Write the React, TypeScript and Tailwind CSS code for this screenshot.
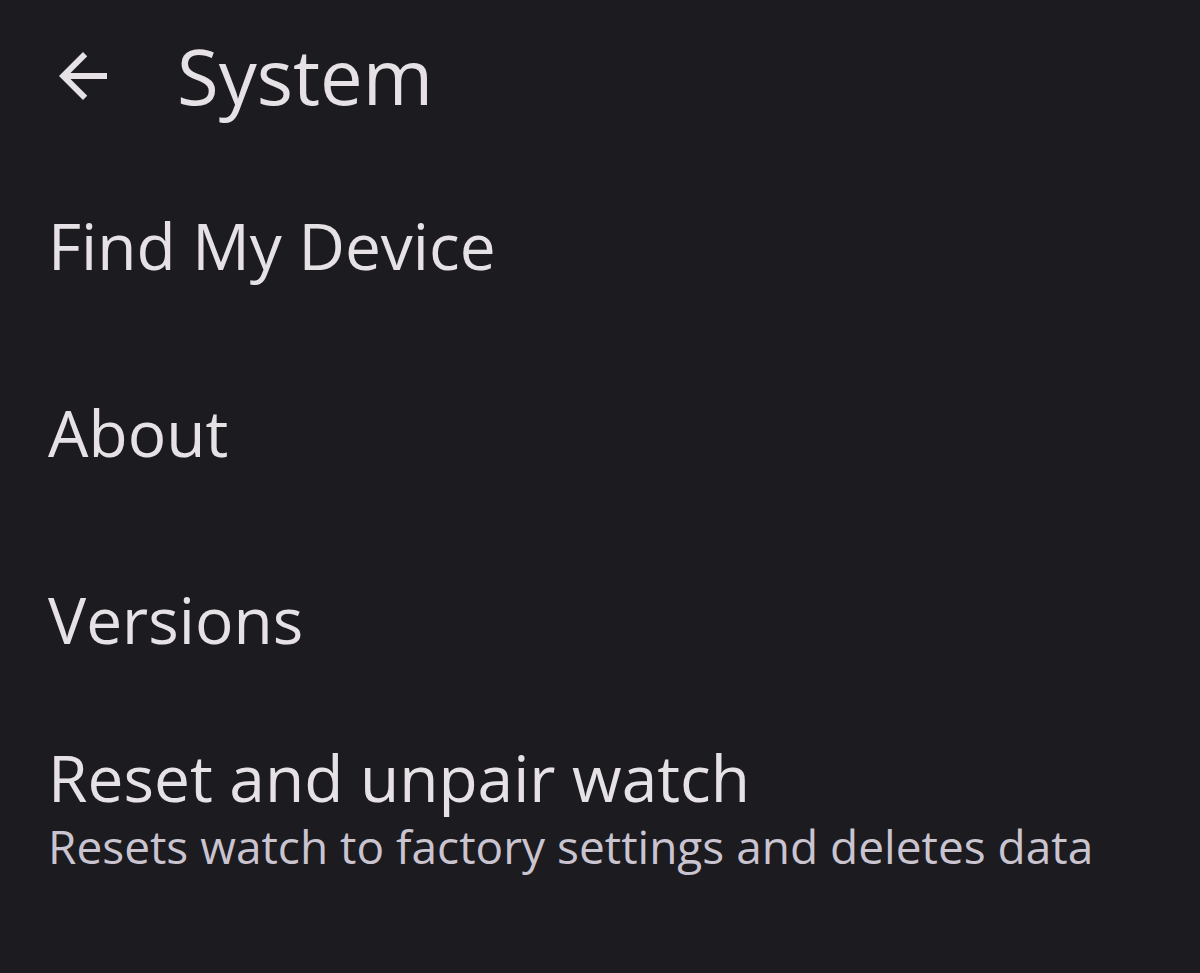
import React from 'react';

function BackArrow() {
  return (
    <svg width="72" height="72" viewBox="0 0 24 24" fill="currentColor" className="text-[#e6e1e5]">
      <path d="M20 11H7.83l5.59-5.59L12 4l-8 8 8 8 1.41-1.41L7.83 13H20v-2z" />
    </svg>
  );
}

const items = [
  { title: 'Find My Device' },
  { title: 'About' },
  { title: 'Versions' },
  { title: 'Reset and unpair watch', sub: 'Resets watch to factory settings and deletes data' },
];

export default function App() {
  return (
    <div
      className="w-[1200px] h-[973px] bg-[#1c1b20] text-[#e6e1e5] overflow-hidden"
      style={{ fontFamily: '"Open Sans", Roboto, sans-serif' }}
    >
      {/* Top bar */}
      <div className="flex items-center h-[152px] pl-[47px]">
        <BackArrow />
        <h1 className="ml-[58px] text-[76px] leading-none">System</h1>
      </div>

      {/* Items */}
      <div className="flex flex-col">
        {items.map(it => (
          <div key={it.title} className="flex flex-col justify-center px-[48px] min-h-[187px]">
            <div className="text-[64px] leading-tight">{it.title}</div>
            {it.sub && <div className="text-[46px] leading-tight text-[#cac4d0]">{it.sub}</div>}
          </div>
        ))}
      </div>
    </div>
  );
}
